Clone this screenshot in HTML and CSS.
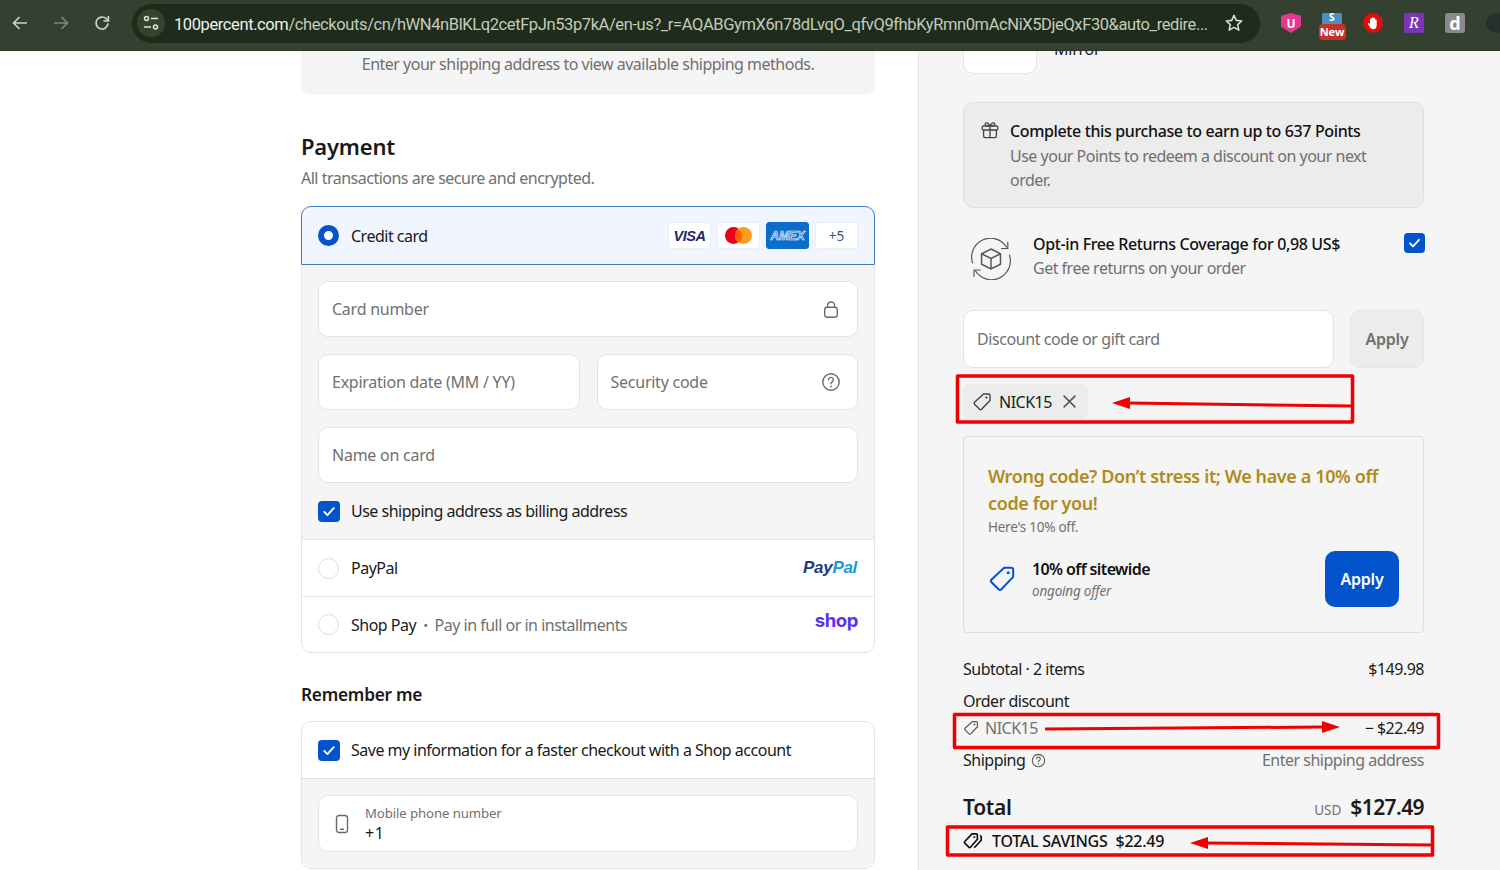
FILE: index.html
```html
<!DOCTYPE html>
<html lang="en">
<head>
<meta charset="utf-8">
<title>Checkout</title>
<link rel="stylesheet" href="styles.css">
</head>
<body>
<svg class="defs" width="0" height="0" aria-hidden="true">
  <symbol id="tag" viewBox="0 0 18 18"><path d="M10.4 1.8h4.500a1.300 1.300 0 0 1 1.300 1.300v4.500L8.600 15.600a1.300 1.300 0 0 1-1.800 0l-4.500-4.500a1.300 1.300 0 0 1 0-1.800z" fill="none" stroke="currentColor" stroke-width="1.300" stroke-linejoin="round"/><circle cx="13" cy="5" r="1" fill="currentColor"/></symbol>
  <symbol id="check" viewBox="0 0 20 20"><path d="M5.500 10.400l3 3 6-6.600" fill="none" stroke="#fff" stroke-width="1.800" stroke-linecap="round" stroke-linejoin="round"/></symbol>
  <symbol id="help" viewBox="0 0 20 20"><circle cx="10" cy="10" r="8.200" fill="none" stroke="currentColor" stroke-width="1.400"/><path d="M7.600 7.800a2.400 2.400 0 1 1 3.600 2.100c-.8.500-1.200.900-1.200 1.800" fill="none" stroke="currentColor" stroke-width="1.400" stroke-linecap="round"/><circle cx="10" cy="14.400" r=".9" fill="currentColor"/></symbol>
</svg>
<div class="app">
  <header class="toolbar">
    <svg class="nav-ico" viewBox="0 0 20 20"><path d="M17 10H4M9.500 4 3.600 10l5.900 6" fill="none" stroke="#c9d2c4" stroke-width="1.700"/></svg>
    <svg class="nav-ico" viewBox="0 0 20 20"><path d="M3 10h13M10.500 4l5.900 6-5.900 6" fill="none" stroke="#7c8778" stroke-width="1.700"/></svg>
    <svg class="nav-ico" viewBox="0 0 20 20"><path d="M16 10.400a6 6 0 1 1-1.800-4.700L16 7.600" fill="none" stroke="#c9d2c4" stroke-width="1.700"/><path d="M16.400 3v5h-5" fill="none" stroke="#c9d2c4" stroke-width="1.700"/></svg>
    <div class="omnibox">
      <span class="site-ico"><svg viewBox="0 0 18 18" width="18" height="18"><circle cx="4.500" cy="4.500" r="2" fill="none" stroke="#e0e6dc" stroke-width="1.500"/><path d="M9 4.500h7M2 13h7" stroke="#e0e6dc" stroke-width="1.600"/><circle cx="13.500" cy="13" r="2" fill="none" stroke="#e0e6dc" stroke-width="1.500"/></svg></span>
      <span class="url"><b>100percent.com</b>/checkouts/cn/hWN4nBlKLq2cetFpJn53p7kA/en-us?_r=AQABGymX6n78dLvqO_qfvQ9fhbKyRmn0mAcNiX5DjeQxF30&amp;auto_redire...</span>
      <svg class="star" viewBox="0 0 20 20"><path d="M10 2.400l2.300 5 5.400.6-4 3.700 1.100 5.400L10 14.400l-4.800 2.700 1.100-5.400-4-3.700 5.400-.6z" fill="none" stroke="#d5dcd0" stroke-width="1.600" stroke-linejoin="round"/></svg>
    </div>
    <div class="exts">
      <span class="ext ext-shield">U</span>
      <span class="ext ext-new"><i class="ext-new-top">S</i><i class="ext-new-tag">New</i></span>
      <span class="ext ext-stop"><svg viewBox="0 0 20 20" width="20" height="20"><path d="M6 1h8l5 5v8l-5 5H6l-5-5V6z" fill="#e30b0b" stroke="#e30b0b" stroke-linejoin="round"/><path d="M7 12V6.200a.9.9 0 0 1 1.700 0V9V4.800a.9.9 0 0 1 1.700 0V9V5.400a.9.9 0 0 1 1.700 0V10V7.200a.8.8 0 0 1 1.600 0v5.200c0 2.400-1.400 3.800-3.400 3.800-1.700 0-2.600-.8-3.400-2.200L5 11.200c-.5-1 .7-1.700 1.300-.9z" fill="#fff"/></svg></span>
      <span class="ext ext-r">R</span>
      <span class="ext ext-d">d</span>
      <span class="ext ext-dark"></span>
    </div>
  </header>

  <main class="page">
    <section class="left">
      <div class="ship-box">Enter your shipping address to view available shipping methods.</div>
      <h2 class="h-pay">Payment</h2>
      <p class="sub">All transactions are secure and encrypted.</p>

      <div class="pay">
        <div class="cc-row">
          <span class="radio on"></span>
          <span class="label">Credit card</span>
          <span class="cards">
            <span class="card visa">VISA</span>
            <span class="card mc"><i class="mc-r"></i><i class="mc-y"></i></span>
            <span class="card amex">AMEX</span>
            <span class="card more">+5</span>
          </span>
        </div>
        <div class="cc-body">
          <div class="fields">
            <div class="field"><span>Card number</span>
              <svg class="f-ico" viewBox="0 0 20 20"><path d="M6.500 9V6.500a3.500 3.500 0 0 1 7 0V9" fill="none" stroke="currentColor" stroke-width="1.400"/><rect x="3.700" y="8.200" width="12.600" height="10" rx="2.400" fill="none" stroke="currentColor" stroke-width="1.400"/></svg>
            </div>
            <div class="field-pair">
              <div class="field"><span>Expiration date (MM / YY)</span></div>
              <div class="field"><span>Security code</span><svg class="f-ico"><use href="#help"/></svg></div>
            </div>
            <div class="field"><span>Name on card</span></div>
          </div>
          <div class="bill-row">
            <span class="cb"><svg><use href="#check"/></svg></span>
            <span class="label">Use shipping address as billing address</span>
          </div>
        </div>
        <div class="pay-row">
          <span class="radio"></span>
          <span class="label">PayPal</span>
          <span class="paypal"><b>Pay</b><i>Pal</i></span>
        </div>
        <div class="pay-row last">
          <span class="radio"></span>
          <span class="label">Shop Pay</span>
          <span class="dot">•</span>
          <span class="muted">Pay in full or in installments</span>
          <span class="shop">shop</span>
        </div>
      </div>

      <h3 class="h-rem">Remember me</h3>
      <div class="rem">
        <div class="rem-row">
          <span class="cb"><svg><use href="#check"/></svg></span>
          <span class="label">Save my information for a faster checkout with a Shop account</span>
        </div>
        <div class="rem-body">
          <div class="field phone">
            <svg class="ph-ico" viewBox="0 0 14 20"><rect x="1.500" y="1.500" width="11" height="17" rx="2.600" fill="none" stroke="currentColor" stroke-width="1.400"/><path d="M5 15.300h4" stroke="currentColor" stroke-width="1.400"/></svg>
            <div class="ph-text"><small>Mobile phone number</small><span>+1</span></div>
          </div>
        </div>
      </div>
    </section>

    <aside class="right">
      <div class="item">
        <div class="thumb"></div>
        <div class="item-name">Mirror</div>
      </div>

      <div class="points">
        <svg class="gift" viewBox="0 0 18 18"><rect x="1.200" y="5" width="15.600" height="4" rx="1.200" fill="none" stroke="currentColor" stroke-width="1.300"/><path d="M2.600 9v6a1.600 1.600 0 0 0 1.600 1.600h9.600a1.600 1.600 0 0 0 1.600-1.600V9M9 5v11.600M9 5C7.600 1.600 4.200.8 4.200 3.200 4.200 4.600 6 5 9 5zM9 5c1.400-3.400 4.800-4.200 4.800-1.800C13.800 4.600 12 5 9 5z" fill="none" stroke="currentColor" stroke-width="1.300"/></svg>
        <div>
          <div class="strong">Complete this purchase to earn up to 637 Points</div>
          <div class="muted pts-body">Use your Points to redeem a discount on your next order.</div>
        </div>
      </div>

      <div class="optin">
        <svg class="ret-ico" viewBox="0 0 40 40"><g fill="none" stroke="#555" stroke-width="1.100"><path d="M2.500 24A18 18 0 0 1 35 9"/><path d="M36 3.500V10h-6.500"/><path d="M37.500 16A18 18 0 0 1 5 31"/><path d="M3.800 37v-6.500h6.500"/><path d="M20 10.500l9 4.500v10l-9 4.500-9-4.500V15z" stroke-width="1.400"/><path d="M11 15l9 4.500 9-4.500M20 19.500V29.500" stroke-width="1.400"/></g></svg>
        <div class="opt-text">
          <div class="strong">Opt-in Free Returns Coverage for 0,98 US$</div>
          <div class="muted">Get free returns on your order</div>
        </div>
        <span class="cb opt-cb"><svg><use href="#check"/></svg></span>
      </div>

      <div class="discount">
        <div class="field disc-input"><span>Discount code or gift card</span></div>
        <div class="apply-gray">Apply</div>
      </div>

      <div class="chip">
        <svg class="ico18"><use href="#tag"/></svg>
        <span>NICK15</span>
        <svg class="chip-x" viewBox="0 0 14 14"><path d="M1.500 1.500l11 11M12.500 1.500l-11 11" stroke="currentColor" stroke-width="1.400"/></svg>
      </div>

      <div class="offer">
        <div class="offer-title">Wrong code? Don’t stress it; We have a 10% off code for you!</div>
        <div class="offer-sub">Here's 10% off.</div>
        <div class="offer-row">
          <svg class="offer-tag"><use href="#tag"/></svg>
          <div class="offer-text">
            <div class="offer-name">10% off sitewide</div>
            <div class="offer-note">ongoing offer</div>
          </div>
          <div class="apply-blue">Apply</div>
        </div>
      </div>

      <div class="sum-row sum-first"><span>Subtotal · 2 items</span><span>$149.98</span></div>
      <div class="sum-row sum-gap"><span>Order discount</span></div>
      <div class="sum-row sum-code">
        <span class="code muted"><svg class="ico16"><use href="#tag"/></svg>NICK15</span>
        <span>− $22.49</span>
      </div>
      <div class="sum-row sum-gap">
        <span class="ship-lab">Shipping <svg class="ico15"><use href="#help"/></svg></span>
        <span class="muted">Enter shipping address</span>
      </div>
      <div class="total">
        <span class="total-lab">Total</span>
        <span class="total-val"><small>USD</small><b>$127.49</b></span>
      </div>
      <div class="savings">
        <svg class="sav-ico" viewBox="0 0 20 18"><path d="M8.500 1.800h4.200a1.200 1.200 0 0 1 1.200 1.200v4.200L7 15.200a1.200 1.200 0 0 1-1.700 0L1.300 11.200a1.200 1.200 0 0 1 0-1.700z" fill="none" stroke="currentColor" stroke-width="1.700"/><path d="M16.500 3.500a1.500 1.500 0 0 1 1.200 1.300v3.400L10.800 15.800" fill="none" stroke="currentColor" stroke-width="1.700"/><circle cx="10.800" cy="5" r="1" fill="currentColor"/></svg>
        <span>TOTAL SAVINGS</span><span>$22.49</span>
      </div>
    </aside>
  </main>

  <svg class="marks" viewBox="0 0 1500 870" width="1500" height="870" aria-hidden="true">
    <g fill="none" stroke="#f00000" stroke-linejoin="round">
      <g stroke-width="3.500">
        <rect x="957.500" y="376" width="395" height="46"/>
        <rect x="954.500" y="714.500" width="484" height="33"/>
        <rect x="947.500" y="827" width="485" height="28"/>
      </g>
      <path stroke-width="3" d="M1352 406 1128 403M1045 729 1322 727M1432 845 1206 843"/>
    </g>
    <g fill="#f00000">
      <path d="M1112 403 1130 397V409z"/>
      <path d="M1340 727 1322 721V733z"/>
      <path d="M1190 843 1208 837V849z"/>
    </g>
  </svg>
</div>
</body>
</html>
```
FILE: styles.css
```css
* { box-sizing: border-box; }
html, body { margin: 0; height: 100%; }
body {
  font-family: "Noto Sans", "Open Sans", "Liberation Sans", sans-serif;
  font-size: 16px;
  letter-spacing: -0.5px;
  color: #1a1a1a;
  background: #fff;
  overflow: hidden;
}
.defs { position: absolute; }
.app { position: relative; width: 1500px; height: 870px; overflow: hidden; display: flex; flex-direction: column; }

/* browser chrome */
.toolbar {
  flex: 0 0 51px;
  height: 51px;
  background: #354130;
  border-bottom: 1px solid #2c3628;
  display: flex;
  align-items: center;
  padding: 0 0 4px 10px;
}
.nav-ico { width: 20px; height: 20px; margin-right: 21px; flex: none; }
.omnibox {
  width: 1128px;
  height: 39px;
  margin-left: -1px;
  border-radius: 20px;
  background: #1f2b1b;
  display: flex;
  align-items: center;
  padding: 0 16px 0 5px;
  flex: none;
}
.site-ico { width: 28px; height: 28px; border-radius: 50%; background: #36432f; display: flex; align-items: center; justify-content: center; flex: none; }
.url { margin-left: 9px; padding-top: 2px; flex: 1; font-family: Roboto, "Noto Sans", sans-serif; font-size: 16.500px; letter-spacing: -0.4px; color: #c3ccbd; white-space: nowrap; overflow: hidden; }
.url b { font-weight: 400; color: #eef2ea; }
.star { width: 20px; height: 20px; flex: none; margin-left: 6px; }
.exts { display: flex; align-items: center; margin-left: 21px; gap: 21px; flex: none; }
.ext { width: 20px; height: 20px; display: flex; align-items: center; justify-content: center; flex: none; font-weight: 700; color: #fff; letter-spacing: 0; }
.ext-shield { background: #e5378f; clip-path: polygon(50% 0, 100% 14%, 100% 68%, 50% 100%, 0 68%, 0 14%); font-size: 12px; }
.ext-new { position: relative; background: #4f8fbe; width: 20px; border-radius: 2px; }
.ext-new-top { font-style: normal; font-size: 10px; position: absolute; top: -3px; left: 7px; }
.ext-new-tag { font-style: normal; position: absolute; top: 11px; left: -3.500px; width: 27px; height: 16px; background: #c8302a; border-radius: 4px; font-size: 11px; line-height: 16px; text-align: center; }
.ext-r { background: #7d35b8; border-radius: 2px; font: italic 400 16px "Liberation Serif", serif; }
.ext-d { background: #8a8a8a; border-radius: 3px; font-size: 18px; line-height: 20px; }
.ext-dark { background: #26302a; border-radius: 50%; }

/* page */
.page { flex: 1; display: flex; min-height: 0; }
.left { flex: 0 0 919px; padding: 0 43px 0 301px; background: #fff; border-right: 1px solid #e4e4e4; }
.right { flex: 1; min-width: 0; padding: 0 76px 0 44px; background: #f5f5f5; }

.muted { color: #707070; }
.label { white-space: nowrap; }
.ship-box { height: 44px; padding-top: 2px; line-height: 22px; text-align: center; color: #707070; background: #f5f5f5; border-radius: 0 0 10px 10px; }
.h-pay { margin: 35px 0 0; font-size: 22px; line-height: 32px; font-weight: 600; letter-spacing: -0.2px; }
.sub { margin: 5px 0 0; line-height: 22px; color: #707070; }

.pay { margin-top: 17px; width: 574px; }
.cc-row {
  height: 59px;
  display: flex;
  align-items: center;
  padding: 0 16px;
  gap: 12px;
  background: #f0f5ff;
  border: 1px solid #3f7cb8;
  border-radius: 10px 10px 0 0;
}
.radio { width: 21px; height: 21px; border-radius: 50%; background: #fff; border: 1px solid #dedede; flex: none; }
.radio.on { background: #fff; border: 6px solid #0353cc; }
.cards { margin-left: auto; display: flex; gap: 6px; }
.card { width: 43px; height: 27px; border-radius: 3px; background: #fff; border: 1px solid #eceef3; display: flex; align-items: center; justify-content: center; position: relative; }
.visa { font: italic 700 14.500px "Liberation Sans", sans-serif; color: #1a2a6c; letter-spacing: -0.4px; }
.mc-r, .mc-y { width: 17px; height: 17px; border-radius: 50%; display: block; }
.mc-r { background: #eb001b; }
.mc-y { background: #f79e1b; margin-left: -7px; }
.mc::after { content: ""; position: absolute; left: 17px; top: 7px; width: 7px; height: 12px; border-radius: 50%; background: #ff5f00; }
.amex { background: #0a6ccb; border-color: #0a6ccb; color: #2f83d6; -webkit-text-stroke: 0.6px #e6f0fb; font: italic 700 12px "Liberation Sans", sans-serif; letter-spacing: -0.2px; }
.more { font-size: 13.500px; color: #2d5a8e; letter-spacing: 0; }

.cc-body { height: 274px; padding: 16px 16px 0; background: #f5f5f5; border-left: 1px solid #e6e6e6; border-right: 1px solid #e6e6e6; }
.fields { display: flex; flex-direction: column; gap: 17px; }
.field-pair { display: flex; gap: 17px; }
.field-pair .field { flex: 1; }
.field {
  height: 56px;
  background: #fff;
  border: 1px solid #e3e3e3;
  border-radius: 10px;
  padding: 0 16px 0 13px;
  display: flex;
  align-items: center;
  justify-content: space-between;
  color: #707070;
  letter-spacing: -0.25px;
}
.f-ico { width: 20px; height: 20px; color: #6a6a6a; flex: none; }
.bill-row { height: 56px; display: flex; align-items: center; gap: 11px; }
.cb { width: 22px; height: 21px; border-radius: 4px; background: #0353cc; flex: none; display: flex; }
.cb svg { width: 100%; height: 100%; }
.pay-row { height: 57px; display: flex; align-items: center; padding: 0 16px; gap: 12px; background: #fff; border: 1px solid #e3e3e3; border-bottom: 0; }
.pay-row.last { border-bottom: 1px solid #e3e3e3; border-radius: 0 0 10px 10px; }
.dot { margin: 0 -5px; color: #707070; font-size: 13px; }
.paypal { margin: 0 1px 0 auto; font: italic 700 17px "Liberation Sans", sans-serif; letter-spacing: -0.3px; }
.paypal b { color: #253b80; }
.paypal i { color: #179bd7; }
.shop { margin-left: auto; margin-top: -9px; color: #5a31f4; font-family: Inter, "Noto Sans", sans-serif; font-size: 18.500px; font-weight: 700; letter-spacing: -0.4px; }

.h-rem { margin: 30px 0 0; font-size: 17.250px; line-height: 24px; font-weight: 600; letter-spacing: -0.25px; }
.rem { margin-top: 14px; width: 574px; border: 1px solid #e3e3e3; border-radius: 10px; overflow: hidden; }
.rem-row { height: 57px; display: flex; align-items: center; gap: 11px; padding: 0 16px; border-bottom: 1px solid #e3e3e3; }
.rem-body { height: 89px; padding: 16px 16px; background: #f5f5f5; }
.phone { justify-content: flex-start; gap: 16px; height: 57px; padding-left: 16px; }
.ph-ico { width: 14px; height: 20px; color: #6a6a6a; flex: none; }
.ph-text { display: flex; flex-direction: column; line-height: 20px; margin-top: -2px; }
.ph-text small { font-size: 13.200px; letter-spacing: -0.1px; }
.ph-text span { color: #1a1a1a; font-size: 16px; letter-spacing: 0.5px; }

/* right */
.item { height: 23px; display: flex; overflow: hidden; }
.thumb { width: 74px; background: #fff; border: 1px solid #e6e6e6; border-top: 0; border-radius: 0 0 10px 10px; flex: none; }
.item-name { margin: -14px 0 0 17px; line-height: 24px; height: 24px; letter-spacing: -0.25px; }
.points { margin-top: 28px; height: 106px; padding: 16px 40px 0 17px; display: flex; gap: 11px; background: #ececec; border: 1px solid #dedede; border-radius: 10px; }
.gift { width: 18px; height: 18px; margin-top: 2px; flex: none; color: #444; }
.strong { font-weight: 500; line-height: 24px; color: #111; white-space: nowrap; letter-spacing: -0.37px; }
.pts-body { line-height: 24px; margin-top: 1px; }
.optin { margin-top: 24px; height: 48px; display: flex; align-items: flex-start; position: relative; }
.ret-ico { width: 42px; height: 42px; margin: 6px 0 0 7px; flex: none; }
.opt-text { margin-left: 21px; line-height: 24px; flex: 1; }
.opt-cb { margin: 1px -1px 0 0; width: 21px; height: 20px; }
.discount { margin-top: 30px; display: flex; gap: 16px; }
.disc-input { width: 371px; height: 58px; letter-spacing: -0.42px; }
.apply-gray { width: 74px; height: 58px; display: flex; align-items: center; justify-content: center; background: #ececec; border: 1px solid #e6e6e6; border-radius: 10px; color: #707070; font-weight: 600; letter-spacing: -0.25px; }
.chip { margin-top: 16px; width: 125px; height: 35px; display: flex; align-items: center; padding-left: 9px; background: #ececec; border-radius: 6px; gap: 7px; }
.ico18 { width: 20px; height: 20px; color: #444; flex: none; }
.chip-x { width: 15px; height: 15px; color: #555; margin-left: 3px; flex: none; }
.offer { margin-top: 17px; height: 197px; padding: 25.500px 24px 0; border: 1px solid #dedede; border-radius: 4px; }
.offer-title { font-size: 18px; line-height: 27px; font-weight: 600; color: #b18a1c; letter-spacing: -0.38px; }
.offer-sub { font-size: 13.500px; line-height: 20px; color: #707070; letter-spacing: -0.25px; }
.offer-row { margin-top: 14.500px; display: flex; align-items: center; }
.offer-tag { width: 28px; height: 28px; color: #0353cc; flex: none; }
.offer-text { margin: 1px 0 0 16px; flex: 1; }
.offer-name { font-weight: 600; line-height: 22px; color: #111; letter-spacing: -0.6px; }
.offer-note { font-size: 13.500px; font-style: italic; line-height: 22px; color: #707070; letter-spacing: -0.2px; }
.apply-blue { width: 74px; height: 56px; border-radius: 10px; background: #0353cc; color: #fff; font-weight: 600; letter-spacing: -0.25px; display: flex; align-items: center; justify-content: center; }

.sum-row { display: flex; justify-content: space-between; line-height: 24px; height: 24px; }
.sum-first { margin-top: 24px; }
.sum-gap { margin-top: 8px; }
.sum-code { margin-top: 3px; }
.code { display: flex; align-items: center; gap: 6px; }
.ico16 { width: 16px; height: 16px; color: #555; }
.ship-lab { display: flex; align-items: center; gap: 6px; }
.ico15 { width: 15px; height: 15px; color: #555; }
.total { margin-top: 19px; height: 32px; display: flex; justify-content: space-between; align-items: center; }
.total-lab { font-size: 21px; font-weight: 600; letter-spacing: -0.3px; }
.total-val { display: flex; align-items: baseline; gap: 9px; }
.total-val small { font-size: 13.500px; color: #707070; letter-spacing: 0; }
.total-val b { font-size: 21px; font-weight: 600; letter-spacing: -0.6px; }
.savings { margin-top: 6px; height: 24px; display: flex; align-items: center; gap: 8px; font-weight: 500; color: #111; letter-spacing: -0.25px; }
.sav-ico { width: 21px; height: 18px; flex: none; }

.marks { position: absolute; top: 0; left: 0; pointer-events: none; }
```
